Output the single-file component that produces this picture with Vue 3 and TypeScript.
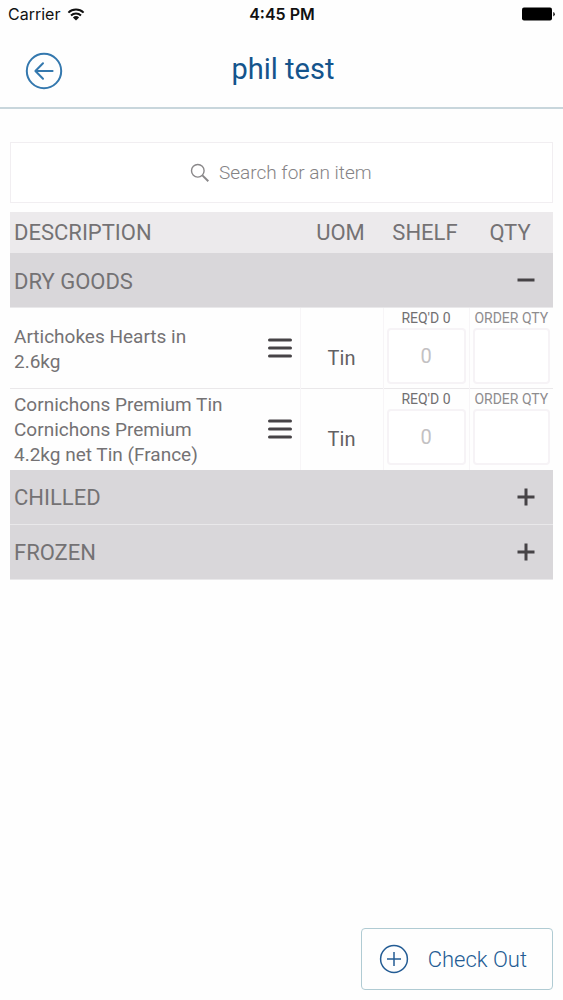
<script setup lang="ts">
import { ref } from 'vue'

interface Item {
  id: string
  lines: string[]
  uom: string
  required: number
}

interface Category {
  id: string
  name: string
  open: boolean
  items: Item[]
}

const search = ref('')

const categories = ref<Category[]>([
  {
    id: 'dry',
    name: 'DRY GOODS',
    open: true,
    items: [
      { id: 'artichokes', lines: ['Artichokes Hearts in', '2.6kg'], uom: 'Tin', required: 0 },
      {
        id: 'cornichons',
        lines: ['Cornichons Premium Tin', 'Cornichons Premium', '4.2kg net Tin (France)'],
        uom: 'Tin',
        required: 0,
      },
    ],
  },
  { id: 'chilled', name: 'CHILLED', open: false, items: [] },
  { id: 'frozen', name: 'FROZEN', open: false, items: [] },
])
</script>

<template>
  <div class="screen">
    <div class="status">
      <span class="carrier">
        Carrier
        <svg class="wifi" viewBox="0 0 18 13" aria-hidden="true">
          <path d="M1.4 4.6a11 11 0 0 1 15.2 0" />
          <path d="M4 7.5a7.2 7.2 0 0 1 10 0" />
          <path class="solid" d="M9 12.6 5.9 9.4a4.5 4.5 0 0 1 6.2 0z" />
        </svg>
      </span>
      <span class="clock">4:45 PM</span>
      <svg class="battery" viewBox="0 0 34 14" aria-hidden="true">
        <rect x="0" y="0.5" width="30" height="13" rx="2" />
        <path d="M31.3 5a2.4 2.4 0 0 1 0 4.4z" />
      </svg>
    </div>

    <header class="bar">
      <button type="button" class="back" aria-label="Back">
        <svg viewBox="0 0 38 38" aria-hidden="true">
          <circle cx="19" cy="19" r="17.2" />
          <path d="M27.6 19H10.6M18 11.2 10.4 19l7.600 7.800" />
        </svg>
      </button>
      <h1>phil test</h1>
    </header>

    <main>
      <label class="search">
        <svg viewBox="0 0 20 20" aria-hidden="true">
          <circle cx="7.800" cy="7.800" r="6.300" />
          <path class="handle" d="m12.400 12.400 5.900 5.900" />
        </svg>
        <input v-model="search" type="text" placeholder="Search for an item" aria-label="Search for an item" />
      </label>

      <table>
        <colgroup>
          <col class="col-desc" />
          <col class="col-uom" />
          <col class="col-shelf" />
          <col class="col-qty" />
        </colgroup>
        <thead>
          <tr>
            <th scope="col" class="first">DESCRIPTION</th>
            <th scope="col">UOM</th>
            <th scope="col">SHELF</th>
            <th scope="col">QTY</th>
          </tr>
        </thead>
        <tbody v-for="category in categories" :key="category.id">
          <tr class="category">
            <th colspan="4" scope="rowgroup">
              <button type="button" :aria-expanded="category.open" @click="category.open = !category.open">
                <span>{{ category.name }}</span>
                <svg viewBox="0 0 18 18" aria-hidden="true">
                  <path :d="category.open ? 'M0.5 9h17' : 'M0.5 9h17M9 0.5v17'" />
                </svg>
              </button>
            </th>
          </tr>
          <template v-if="category.open">
            <tr v-for="item in category.items" :key="item.id" class="item">
              <td>
                <div class="desc">
                  <p><span v-for="line in item.lines" :key="line">{{ line }}</span></p>
                  <button type="button" class="menu" :aria-label="`Options for ${item.lines[0]}`">
                    <svg viewBox="0 0 24 20" aria-hidden="true">
                      <path d="M1.500 2h21M1.500 10h21M1.500 18h21" />
                    </svg>
                  </button>
                </div>
              </td>
              <td class="uom">{{ item.uom }}</td>
              <td>
                <label class="field">
                  <span class="required">REQ'D {{ item.required }}</span>
                  <input type="text" inputmode="numeric" placeholder="0" />
                </label>
              </td>
              <td>
                <label class="field">
                  <span>ORDER QTY</span>
                  <input type="text" inputmode="numeric" />
                </label>
              </td>
            </tr>
          </template>
        </tbody>
      </table>
    </main>

    <footer>
      <button type="button" class="checkout">
        <svg viewBox="0 0 30 30" aria-hidden="true">
          <circle cx="15" cy="15" r="13.400" />
          <path d="M8 15h14M15 8v14" />
        </svg>
        <span>Check Out</span>
      </button>
    </footer>
  </div>
</template>

<style>
body {
  margin: 0;
  background: #fefefe;
}
</style>

<style scoped>
.screen {
  box-sizing: border-box;
  display: flex;
  flex-direction: column;
  min-height: 100vh;
  background: #fefefe;
  color: #747274;
  font-family: Roboto, 'Liberation Sans', sans-serif;
}

button,
input {
  font: inherit;
  color: inherit;
}

button {
  padding: 0;
  border: 0;
  background: none;
  cursor: pointer;
}

svg {
  display: block;
  flex: none;
  fill: none;
  stroke: currentColor;
}

.status {
  display: grid;
  grid-template-columns: 1fr auto 1fr;
  align-items: center;
  height: 28px;
  padding: 0 7px 0 8px;
  color: #111;
  font-family: Inter, 'Liberation Sans', sans-serif;
  font-size: 16px;
}

.carrier {
  display: flex;
  align-items: center;
  gap: 7px;
}

.wifi {
  width: 18px;
  height: 13px;
  stroke-width: 2;
}

.wifi .solid {
  fill: currentColor;
  stroke: none;
}

.clock {
  font-weight: 600;
}

.battery {
  justify-self: end;
  width: 34px;
  height: 14px;
  fill: #000;
  stroke: none;
}

.bar {
  display: grid;
  grid-template-columns: 38px 1fr 38px;
  align-items: center;
  height: 79px;
  padding: 0 22px 0 25px;
  border-bottom: 2px solid #c8d6dc;
  color: #14548c;
}

.bar h1 {
  margin: 2px 0 0;
  font-size: 29px;
  font-weight: 400;
  line-height: 36px;
  text-align: center;
}

.back {
  width: 38px;
  height: 38px;
  margin-top: 6px;
  color: #3478ae;
}

.back svg {
  width: 38px;
  height: 38px;
  stroke-width: 2;
  stroke-linecap: round;
  stroke-linejoin: round;
}

main {
  flex: 1;
  padding: 33px 10px 0;
}

.search {
  box-sizing: border-box;
  display: flex;
  align-items: center;
  justify-content: center;
  gap: 9px;
  height: 61px;
  margin-bottom: 9px;
  border: 1px solid #f1eef1;
  background: #fff;
}

.search svg {
  width: 20px;
  height: 20px;
  color: #8a888a;
  stroke-width: 1.4;
}

.search .handle {
  stroke-width: 2;
}

.search input {
  width: 154px;
  padding: 0;
  border: 0;
  outline: 0;
  background: none;
  font-size: 19px;
  font-weight: 300;
}

.search input::placeholder {
  color: #858385;
  opacity: 1;
}

table {
  width: 100%;
  border-collapse: collapse;
  table-layout: fixed;
}

.col-uom {
  width: 83px;
}

.col-shelf {
  width: 86px;
}

.col-qty {
  width: 84px;
}

th,
td {
  padding: 0;
  font-weight: 400;
}

thead th {
  height: 41px;
  padding-right: 2px;
  background: #eceaec;
  font-size: 22px;
}

thead .first {
  padding-left: 4px;
  text-align: left;
}

.category th {
  border-bottom: 1px solid #e9e8ea;
  background: #d9d7da;
}

.category button {
  display: flex;
  align-items: center;
  justify-content: space-between;
  width: 100%;
  height: 54px;
  padding: 0 18px 0 4px;
  font-size: 22px;
}

.category span {
  padding-top: 2px;
}

.category svg {
  width: 18px;
  height: 18px;
  color: #464346;
  stroke-width: 3;
}

.item {
  height: 81px;
  border-bottom: 1px solid #eae8ea;
}

.item:last-child {
  border-bottom: 0;
}

.item td + td {
  border-left: 1px solid #f7f5f7;
}

.desc {
  display: flex;
  align-items: center;
  justify-content: space-between;
  padding: 0 8px 0 4px;
}

.desc p {
  margin: 1px 0 0;
  font-size: 19px;
  line-height: 25px;
}

.desc span {
  display: block;
}

.menu svg {
  width: 24px;
  height: 20px;
  color: #464346;
  stroke-width: 3;
  stroke-linecap: round;
}

.item .uom {
  padding-top: 20px;
  color: #636163;
  font-size: 20px;
  text-align: center;
}

.field {
  display: flex;
  flex-direction: column;
  align-items: center;
  gap: 2px;
  padding: 0 3px 3px;
  color: #8e8c8e;
  font-size: 14px;
  line-height: 16px;
  white-space: nowrap;
}

.field .required {
  color: #716f71;
}

.field input {
  box-sizing: border-box;
  width: 100%;
  height: 56px;
  padding: 0;
  border: 2px solid #f6f3f6;
  border-radius: 4px;
  background: #fff;
  font-size: 20px;
  text-align: center;
}

.field input::placeholder {
  color: #c3c1c3;
  opacity: 1;
}

footer {
  display: flex;
  justify-content: flex-end;
  padding: 10px;
}

.checkout {
  display: flex;
  align-items: center;
  gap: 19px;
  height: 62px;
  padding: 0 25px 0 17px;
  border: 1px solid #b0cbd3;
  border-radius: 4px;
  color: #245c94;
  font-size: 22px;
  font-weight: 300;
}

.checkout svg {
  width: 30px;
  height: 30px;
  stroke-width: 1.5;
}
</style>
